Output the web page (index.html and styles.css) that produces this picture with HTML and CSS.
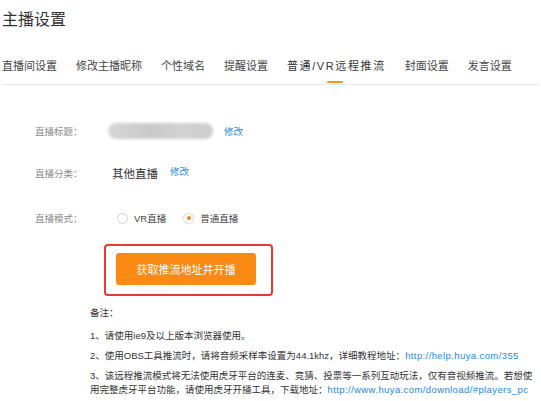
FILE: index.html
```html
<!DOCTYPE html>
<html lang="zh-CN">
<head>
<meta charset="utf-8">
<title>主播设置</title>
<link rel="stylesheet" href="styles.css">
</head>
<body>
<div class="page">
  <h1 class="title">主播设置</h1>
  <nav class="tabs">
    <span class="tab">直播间设置</span>
    <span class="tab">修改主播昵称</span>
    <span class="tab">个性域名</span>
    <span class="tab">提醒设置</span>
    <span class="tab active">普通/VR远程推流</span>
    <span class="tab">封面设置</span>
    <span class="tab">发言设置</span>
  </nav>
  <div class="content">
    <div class="form">
      <div class="row row-title">
        <span class="label">直播标题：</span>
        <span class="blurred"></span>
        <a class="link">修改</a>
      </div>
      <div class="row row-cat">
        <span class="label">直播分类：</span>
        <span class="value">其他直播</span>
        <a class="link">修改</a>
      </div>
      <div class="row row-mode">
        <span class="label">直播模式：</span>
        <label class="radio"><span class="dot"></span>VR直播</label>
        <label class="radio checked"><span class="dot"></span>普通直播</label>
      </div>
    </div>
    <div class="highlight">
      <button class="btn">获取推流地址并开播</button>
    </div>
    <div class="notes">
      <p class="notes-title">备注：</p>
      <p>1、请使用ie9及以上版本浏览器使用。</p>
      <p>2、使用OBS工具推流时，请将音频采样率设置为44.1khz，详细教程地址：<a class="link">http://help.huya.com/355</a></p>
      <p>3、该远程推流模式将无法使用虎牙平台的连麦、竞猜、投票等一系列互动玩法，仅有音视频推流。若想使<br>用完整虎牙平台功能，请使用虎牙开播工具，下载地址：<a class="link">http://www.huya.com/download/#players_pc</a></p>
    </div>
  </div>
</div>
</body>
</html>
```

FILE: styles.css
```css
html, body {
  margin: 0;
  padding: 0;
  background: #ffffff;
}
body {
  font-family: "Liberation Sans", "Noto Sans CJK SC", sans-serif;
  color: #333;
  width: 541px;
  height: 401px;
  overflow: hidden;
}
.page {
  padding: 0 3px 0 2px;
}
.title {
  margin: 0;
  padding-top: 11px;
  font-size: 16px;
  line-height: 18px;
  font-weight: normal;
  color: #333;
}
.tabs {
  display: flex;
  gap: 19px;
  margin-top: 30px;
  border-bottom: 1px solid #e8e8e8;
}
.tab {
  position: relative;
  font-size: 11px;
  line-height: 14px;
  padding-bottom: 11px;
  color: #444;
  white-space: nowrap;
}
.tab.active {
  color: #333;
  letter-spacing: 1.6px;
}
.tab.active::after {
  content: "";
  position: absolute;
  left: 50%;
  bottom: 1px;
  width: 16px;
  height: 2px;
  margin-left: -9px;
  background: #f39c12;
  border-radius: 1px;
}
.content {
  padding-top: 36px;
}
.form {
  padding-left: 33px;
  display: flex;
  flex-direction: column;
  gap: 22px;
}
.row {
  display: flex;
  align-items: center;
  height: 20px;
}
.label {
  width: 73px;
  font-size: 9.5px;
  color: #8a8a8a;
  white-space: nowrap;
}
.blurred {
  width: 105px;
  height: 16px;
  border-radius: 8px;
  background: linear-gradient(90deg, #d6d6d6, #c9c9c9 40%, #d2d2d2 70%, #cdcdcd);
  filter: blur(1.5px);
}
.row-title .link {
  margin-left: 11px;
}
.value {
  margin-left: 4px;
  font-size: 11.5px;
  color: #333;
}
.row-cat .link {
  margin-left: 12px;
  position: relative;
  top: -2px;
}
.link {
  color: #1e88e5;
  font-size: 9.5px;
  text-decoration: none;
}
.row-mode {
  margin-top: 3px;
}
.radio {
  display: flex;
  align-items: center;
  font-size: 9.5px;
  color: #444;
  margin-left: 9px;
}
.radio + .radio {
  margin-left: 17px;
}
.dot {
  width: 11px;
  height: 11px;
  border: 1px solid #d0d0d0;
  border-radius: 50%;
  box-sizing: border-box;
  margin-right: 6px;
  display: flex;
  align-items: center;
  justify-content: center;
  background: #fff;
}
.radio.checked .dot {
  border-color: #dcdcdc;
  box-shadow: 0 0 2px rgba(0, 0, 0, 0.08);
}
.radio.checked .dot::after {
  content: "";
  width: 4px;
  height: 4px;
  border-radius: 50%;
  background: #f5821f;
}
.highlight {
  margin: 16px 0 0 102px;
  width: 143px;
  padding: 7px 12px 9px 10px;
  border: 2px solid #e53935;
  border-radius: 4px;
}
.btn {
  display: block;
  width: 140px;
  height: 32px;
  border: 0;
  border-radius: 3px;
  background: #fb8a14;
  color: #fff;
  font-family: "Liberation Sans", "Noto Sans CJK SC", sans-serif;
  font-size: 11px;
  padding: 0;
}
.notes {
  padding-left: 88px;
  margin-top: 10px;
  font-size: 9.5px;
  color: #333;
}
.notes p {
  margin: 0 0 6px;
  line-height: 14px;
  white-space: nowrap;
}
.notes .notes-title {
  margin-bottom: 9px;
}
.notes .link {
  font-size: 9.5px;
  letter-spacing: 0.4px;
}
```
